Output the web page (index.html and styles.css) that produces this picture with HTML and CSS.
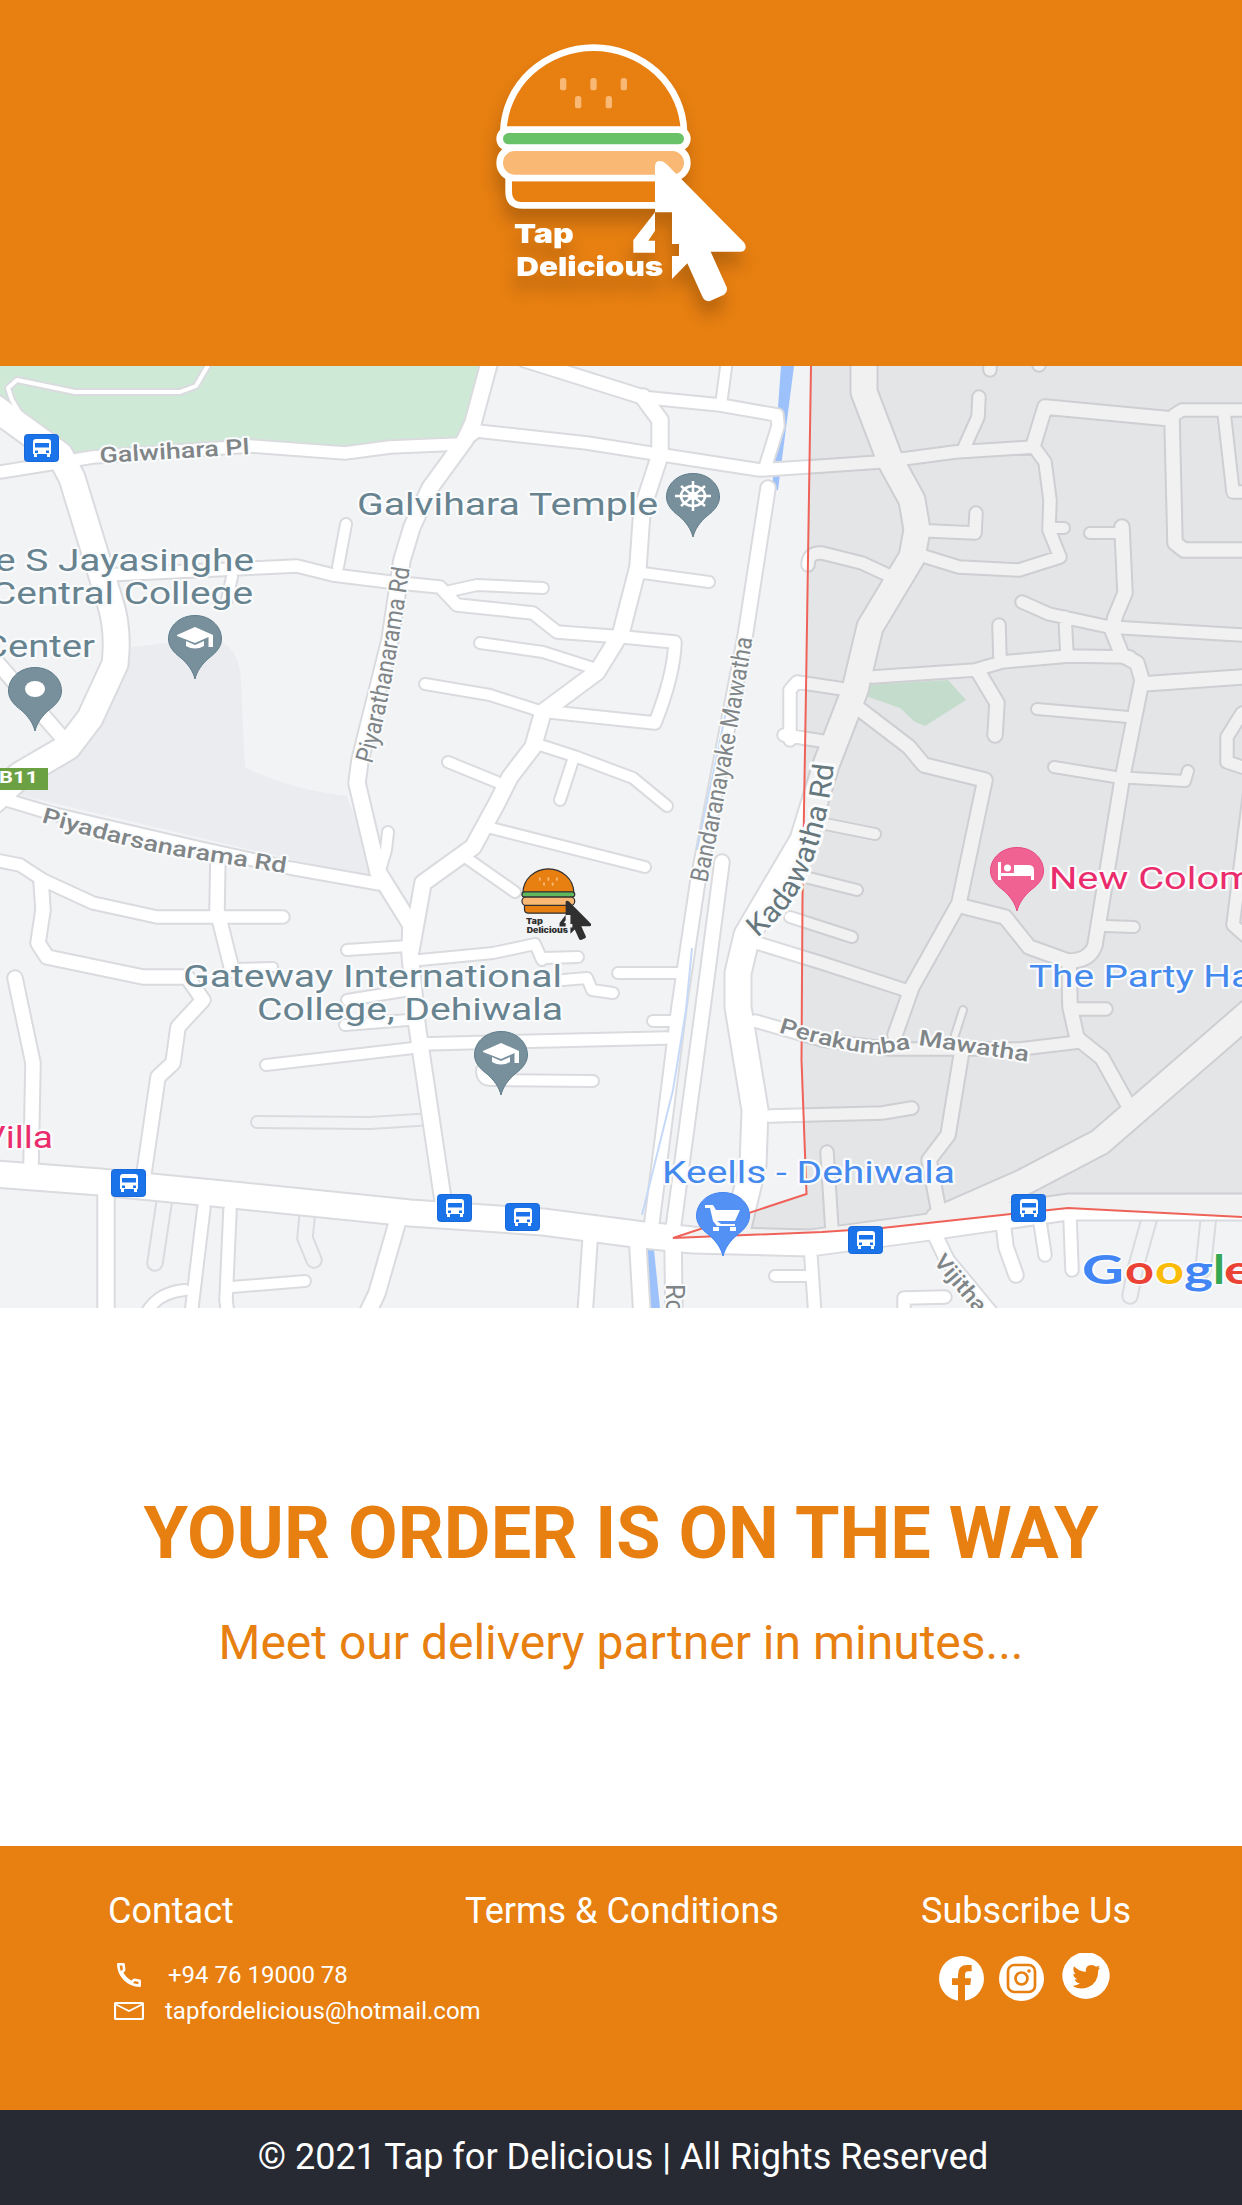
FILE: index.html
```html
<!DOCTYPE html>
<html lang="en">
<head>
<meta charset="utf-8">
<title>Tap for Delicious</title>
<link rel="stylesheet" href="styles.css">
</head>
<body>
<svg class="sprites" aria-hidden="true">
  <symbol id="logo" viewBox="0 0 900 960">
    <g class="logo-line">
      <path class="logo-bun" d="M100 334A271 258 0 0 1 371 83A271 258 0 0 1 642 334Z"/>
      <path class="logo-bun" d="M116 474V515Q116 556 158 556H590V474Z"/>
      <rect class="logo-patty" x="89" y="383" width="563" height="91" rx="45"/>
      <rect class="logo-salad" x="89" y="329" width="563" height="54" rx="27"/>
    </g>
    <g class="logo-seed">
      <rect x="270" y="174" width="19" height="37" rx="8"/><rect x="361" y="174" width="19" height="37" rx="8"/><rect x="452" y="174" width="19" height="37" rx="8"/>
      <rect x="315" y="228" width="19" height="37" rx="8"/><rect x="407" y="228" width="19" height="37" rx="8"/>
    </g>
    <g class="logo-ink">
      <path d="M555 438Q556 423 570 423Q580 423 590 433L820 665Q830 675 826 686Q822 695 812 695H722L770 802Q774 815 762 824L720 843Q706 846 698 832L652 730L606 777V708H627V672H606V577H555Z"/>
      <path d="M555 577L490 660V698H555V662H535L555 632Z"/>
      <text x="132" y="669" textLength="179" lengthAdjust="spacingAndGlyphs">Tap</text>
      <text x="139" y="767" textLength="441" lengthAdjust="spacingAndGlyphs">Delicious</text>
    </g>
  </symbol>
  <symbol id="bus" viewBox="0 0 35 28">
    <rect class="bus-plate" x=".5" y=".5" width="34" height="27" rx="3"/>
    <path fill="#fff" fill-rule="evenodd" d="M9 8Q9 5 12 5H24Q27 5 27 8V20H26V23H23V20H13V23H10V20H9ZM11 9V13.500H25V9ZM11 16.500V19H14V16.500ZM22 16.500V19H25V16.500Z"/>
  </symbol>
  <symbol id="pin" viewBox="-28 -66 56 66" overflow="visible">
    <path d="M0-1C-2-9-7-16-14-22C-22-28-26.500-34-26.500-41C-26.500-54-15-64.500 0-64.500S26.500-54 26.500-41C26.500-34 22-28 14-22C7-16 2-9 0-1Z"/>
  </symbol>
  <symbol id="cap" viewBox="-20 -20 40 30" overflow="visible">
    <path fill="#fff" d="M-18-2L0-10L18-2V10H13.500V0L0 6L-18-1ZM-9 4L0 8L9 4V9Q0 14-9 9Z"/>
  </symbol>
</svg>

<header class="header">
  <svg class="logo" role="img" aria-label="Tap 4 Delicious"><use href="#logo"/></svg>
</header>

<main>
<svg class="map" viewBox="0 366 1242 942" role="img" aria-label="Delivery map">
  <defs>
    <g id="lanes">
      <path class="w10" d="M257 1122L370 1123L433 1119"/>
      <path class="w14" d="M164 1203L155 1263M307 1217L305 1238L314 1260M1149 1220L1135 1270L1130 1296M1208 1222L1203 1270"/>
    </g>
    <g id="roads">
      <path class="w5" d="M210 362L196 386L180 392H75L17 380L8 388L12 400L24 420"/>
      <path class="w6" d="M963 1010L955 1035"/>
      <path class="w8" d="M230 968L273 967"/>
      <path class="w10" d="M727 360L721 405M643 573L709 582M450 591L477 585L543 588M480 643L543 652L593 668M425 684L490 695L543 712M448 762L497 782M540 745L577 757L633 778L667 806M573 760L560 800M487 827L645 867M465 857L515 892M420 960L493 953L535 944L542 960M543 958L578 957M563 980L587 978L592 990L613 993M618 973H677M346 524L338 567M232 577L227 600M347 950L408 946M347 1000L410 990M388 832L386 850L380 870M266 1065L413 1048M345 1025L408 1020M1055 528H1064M1090 533H1122M1037 709L1128 717M1054 767L1115 777L1185 781L1188 771M815 822L875 834M805 877L857 890M790 917L852 937M1105 926L1134 927M775 1276H807M232 1287L305 1281M185 1290Q160 1292 148 1310M653 1021H672M482 1070Q482 1080 490 1080L593 1081"/>
      <path class="w12" d="M0 472L50 464L93 457L250 446L345 453L390 447L460 444L477 431L587 443L650 453L760 470L822 466L880 462L955 452L1034 447M640 397L720 405L777 415L778 426L765 468M105 575L297 566L333 575L390 582L440 587L457 605L533 613L557 632L623 637L675 642Q674 675 655 723L550 712M0 861L20 865L43 880L93 903L157 917H283M0 798L50 813L200 848L290 868L380 884M808 565Q808 552 822 553L862 563L890 576M790 740V690L797 682L850 690M784 735L822 741M979 397L978 417L964 448M990 366V370M1039 363V365M930 531L975 533L976 513M1174 415L1182 410H1242M1224 412L1233 492H1242M1034 447L1045 462L1050 500L1049 530L1060 557L1019 570L959 567L920 555M1022 602L1049 614L1109 627L1242 635M1065 617L1067 655M999 625L1000 660M872 677L975 670L1002 662L1069 656L1130 657M420 1044L667 1038M770 1116L882 1113L912 1108M827 1152L832 1230M755 1021L822 1040L890 1049H1020L1079 1042M757 943L822 963L905 990M1077 1009H1106M945 1297L904 1298V1315M1040 1222L1045 1255M1070 1217L1072 1270M811 1257L815 1315M204 1207L191 1315M230 1210L226 1300L228 1315M1250 790L1233 925L1250 940M1242 713L1227 737V762L1242 767"/>
      <path class="w14" d="M1034 443L1045 407L1172 419L1175 543L1184 550H1242M1142 684L1242 677M979 673L997 703L995 735M858 708L909 747L924 765L985 780L959 903L912 987L895 1035M1122 527L1125 593L1115 617L1112 630L1122 655L1137 663L1142 680L1122 780L1095 945Q1090 961 1068 961L1029 947L1005 917L965 907M1069 961L1070 1007L1077 1038L1102 1058L1127 1103M962 1050L948 1135L929 1160L938 1207M935 1235L947 1260L990 1312M1003 1222L1006 1247L1016 1275M590 1240L585 1315M768 488L745 637L698 880L679 1007L651 1230M722 862L703 1007L673 1230M41 880L43 910L38 943L47 957L143 977L187 977L203 1000L178 1027L173 1063L158 1077L143 1180M218 855L217 910L232 970M15 978L33 1063L31 1165M525 360L643 397M-5 660L60 735"/>
      <path class="w16" d="M490 360L473 423L465 440L430 488L412 527L402 560L390 640L360 760L357 783L378 872L411 925L410 953L417 1025L443 1200M643 397L660 420V455L642 510L638 567L621 633L597 672L543 712L533 747L510 777L497 803L473 847L423 883L411 950M638 1247L642 1315M673 1240L674 1315M106 1190V1315M398 1220L377 1293L368 1312"/>
      <path class="w26" d="M-5 408L60 455L72 478L110 602Q119 630 115 664L90 718L68 747L20 775L-6 800M864 360V392L890 460L912 500L917 530L912 557L870 627L855 690L826 765L803 840L747 935L738 973V1007L755 1110L753 1165L735 1240M-5 1174L100 1182L233 1195L410 1213L543 1222L643 1235L693 1240L810 1243L922 1228L1068 1207H1250M938 1220L1022 1183L1100 1142L1250 1012"/>
    </g>
    <path id="t1" d="M100 463L252 454"/>
    <path id="t2" d="M41 822Q110 843 170 855L290 874"/>
    <path id="t3" d="M372 764Q390 705 410 566"/>
    <path id="t4" d="M707 883Q729 780 753 636"/>
    <path id="t5" d="M757 938C798 905 810 870 820 838Q831 800 834 761"/>
    <path id="t6" d="M778 1032Q840 1052 880 1054L915 1048"/>
    <path id="t7" d="M918 1045L1030 1062"/>
    <path id="t8" d="M933 1262L985 1324"/>
  </defs>

  <rect class="land" y="366" width="1242" height="942"/>
  <path class="campus" d="M133 647L205 638Q241 640 241 685L245 767Q285 788 347 796L378 880L20 795Z"/>
  <path class="park" d="M0 366H483L462 443L345 452L250 446L70 455L0 400ZM868 685L948 680L966 700L925 726L915 722L900 708L866 696Z"/>
  <path class="water" d="M781 366H794L778 490H772ZM645 1250H654L660 1308H650Z"/>
  <use class="casing" href="#lanes"/><use class="lane-fill" href="#lanes"/>
  <use class="casing" href="#roads"/><use class="road-fill" href="#roads"/>
  <path class="stream" d="M739 650L697 850M692 948L686 1010L673 1090L642 1215"/>
  <path class="outside" d="M811 366L808 560L806 690L802.500 900L801 1060L807 1194L673 1238L822 1232L882 1228L1011 1214L1068 1208L1242 1217V366Z"/>
  <path class="border" d="M811 366L808 560L806 690L802.500 900L801.500 1060L806.500 1194L673 1238L822 1232L882 1228L1011 1214L1068 1208L1242 1217"/>

  <g class="street">
    <text><textPath href="#t1" textLength="150" lengthAdjust="spacingAndGlyphs">Galwihara Pl</textPath></text>
    <text><textPath href="#t2" textLength="250" lengthAdjust="spacingAndGlyphs">Piyadarsanarama Rd</textPath></text>
    <text class="tall"><textPath href="#t3" textLength="200" lengthAdjust="spacingAndGlyphs">Piyarathanarama Rd</textPath></text>
    <text class="tall"><textPath href="#t4" textLength="249" lengthAdjust="spacingAndGlyphs">Bandaranayake Mawatha</textPath></text>
    <text class="major"><textPath href="#t5" textLength="195" lengthAdjust="spacingAndGlyphs">Kadawatha Rd</textPath></text>
    <text><textPath href="#t6" textLength="136" lengthAdjust="spacingAndGlyphs">Perakumba</textPath></text>
    <text><textPath href="#t7" textLength="111" lengthAdjust="spacingAndGlyphs">Mawatha</textPath></text>
    <text><textPath href="#t8" textLength="68" lengthAdjust="spacingAndGlyphs">Vijitha</textPath></text>
    <text class="tall" transform="translate(666 1284) rotate(90)">Ro</text>
  </g>

  <g class="place">
    <text x="357" y="515" textLength="301" lengthAdjust="spacingAndGlyphs">Galvihara Temple</text>
    <text x="-5" y="571" textLength="259" lengthAdjust="spacingAndGlyphs">e S Jayasinghe</text>
    <text x="-9" y="604" textLength="262" lengthAdjust="spacingAndGlyphs">Central College</text>
    <text x="-17" y="657" textLength="112" lengthAdjust="spacingAndGlyphs">Center</text>
    <text x="183" y="987" textLength="379" lengthAdjust="spacingAndGlyphs">Gateway International</text>
    <text x="257" y="1020" textLength="306" lengthAdjust="spacingAndGlyphs">College, Dehiwala</text>
    <text class="hotel" x="1049" y="889" textLength="205" lengthAdjust="spacingAndGlyphs">New Colom</text>
    <text class="hotel" x="-18" y="1148" textLength="71" lengthAdjust="spacingAndGlyphs">Villa</text>
    <text class="shop" x="1029" y="987" textLength="223" lengthAdjust="spacingAndGlyphs">The Party Ha</text>
    <text class="shop" x="662" y="1183" textLength="293" lengthAdjust="spacingAndGlyphs">Keells - Dehiwala</text>
  </g>

  <rect class="route" y="768" width="48" height="22"/>
  <text class="route-no" x="-1" y="783" textLength="39" lengthAdjust="spacingAndGlyphs">B11</text>

  <g class="stops">
    <use href="#bus" x="24" y="434" width="35" height="28"/><use href="#bus" x="111" y="1169" width="35" height="28"/>
    <use href="#bus" x="437" y="1194" width="35" height="28"/><use href="#bus" x="505" y="1203" width="35" height="28"/>
    <use href="#bus" x="848" y="1226" width="35" height="28"/><use href="#bus" x="1011" y="1194" width="35" height="28"/>
  </g>

  <g class="pin-gray">
    <use href="#pin" x="167" y="614" width="56" height="66"/>
    <use href="#pin" x="665" y="472" width="56" height="66"/>
    <use href="#pin" x="7" y="666" width="56" height="66"/>
    <use href="#pin" x="473" y="1030" width="56" height="66"/>
  </g>
  <use href="#cap" x="175" y="617" width="40" height="30"/>
  <use href="#cap" x="481" y="1033" width="40" height="30"/>
  <ellipse cx="35" cy="689" rx="10" ry="8" fill="#fff"/>
  <g class="wheel" transform="translate(693 496)">
    <ellipse rx="12" ry="10"/><path d="M-18 0H18M0-15V15M-12-10L12 10M-12 10L12-10"/><ellipse rx="4" ry="3"/>
  </g>
  <use class="pin-blue" href="#pin" x="695" y="1191" width="56" height="66"/>
  <path fill="#fff" d="M705 1205H713L716 1210H740L735 1221H717L721 1224H735V1226H717L713 1221L710 1208H705ZM713 1227H719V1231H713ZM730 1227H736V1231H730Z"/>
  <use class="pin-pink" href="#pin" x="989" y="846" width="56" height="66"/>
  <path fill="#fff" d="M998 862H1001V873H1014V865H1028Q1034 865 1034 870V880H1031V876H1001V880H998Z"/><circle cx="1007.500" cy="868" r="3.500" fill="#fff"/>

  <g class="google">
    <text class="g-blue" x="1082" y="1284" textLength="42" lengthAdjust="spacingAndGlyphs">G</text>
    <text class="g-red" x="1125" y="1284" textLength="29" lengthAdjust="spacingAndGlyphs">o</text>
    <text class="g-yellow" x="1155" y="1284" textLength="29" lengthAdjust="spacingAndGlyphs">o</text>
    <text class="g-blue" x="1184" y="1284" textLength="29" lengthAdjust="spacingAndGlyphs">g</text>
    <text class="g-green" x="1213" y="1284" textLength="12" lengthAdjust="spacingAndGlyphs">l</text>
    <text class="g-red" x="1224" y="1284" textLength="29" lengthAdjust="spacingAndGlyphs">e</text>
  </g>
  <use class="courier" href="#logo" x="513.600" y="861" width="84.400" height="90"/>
</svg>

<section class="status">
  <h1>YOUR ORDER IS ON THE WAY</h1>
  <p>Meet our delivery partner in minutes...</p>
</section>
</main>

<footer>
  <div class="links">
    <section>
      <h2>Contact</h2>
      <ul class="contact">
        <li class="phone"><svg width="24" height="24" viewBox="0 0 24 24"><path fill="none" stroke="#fff" stroke-width="2.600" stroke-linejoin="round" d="M1.300 1.300H6.500L7.200 7L4.500 9.500Q8 16 14.500 19.500L17 16.800L22.700 17.800V22.700Q14 22.500 7.500 16Q1.300 9.500 1.300 1.300Z"/><path fill="#fff" d="M3 8L6 9Q9 15 15 18L16 21Q7 18 3 8Z"/></svg><span>+94 76 19000 78</span></li>
        <li class="mail"><svg width="30" height="18" viewBox="0 0 30 18"><rect x="1" y="1" width="28" height="16" rx="1" fill="none" stroke="#fff" stroke-width="2.200"/><path d="M2 2.500L15 9L28 2.500" fill="none" stroke="#fff" stroke-width="1.600"/></svg><span>tapfordelicious@hotmail.com</span></li>
      </ul>
    </section>
    <section><h2>Terms &amp; Conditions</h2></section>
    <section>
      <h2>Subscribe Us</h2>
      <div class="social">
        <svg width="45" height="45" viewBox="0 0 135 135"><circle cx="67.500" cy="67.500" r="67.500" fill="#fff"/><path class="cut" d="M57 135V87H39V67H57V56Q57 27 84 27H98V46H88Q78 46 78 57V67H96L94 87H78V135Z"/></svg>
        <svg width="45" height="45" viewBox="0 0 135 135"><circle cx="67.500" cy="67.500" r="67.500" fill="#fff"/><rect class="cut-line" x="27" y="27" width="81" height="81" rx="19"/><circle class="cut-line" cx="67.500" cy="67.500" r="18"/><circle class="cut" cx="90" cy="45" r="5.500"/></svg>
        <svg class="twitter" width="48" height="47" viewBox="0 0 144 141"><path d="M45 3Q50 0 56 0H88Q94 0 99 3A71 70 0 1 1 45 3Z" fill="#fff"/><path class="cut" d="M31 98Q44 99 54 91Q41 90 38 79Q42 80 46 78Q34 74 34 62L41 64Q30 53 36 40Q50 55 71 57Q70 36 88 36Q97 36 102 41L113 38L109 46L114 44L109 51Q109 90 78 103Q51 112 31 98Z"/></svg>
      </div>
    </section>
  </div>
  <p class="copyright">© 2021 Tap for Delicious | All Rights Reserved</p>
</footer>
</body>
</html>
```

FILE: styles.css
```css
:root { --orange: #e77f11; }
* { box-sizing: border-box; }
body { margin: 0; background: #fff; font-family: Roboto, "Liberation Sans", sans-serif; }
h1, h2, p, ul { margin: 0; padding: 0; font-weight: 400; list-style: none; }
.sprites { display: block; width: 0; height: 0; }

.header { height: 366px; padding: 20px 0 0 470px; background: var(--orange); }
.logo {
  display: block; width: 300px; height: 320px;
  --line: #fff; --line-width: 20px; --salad: #69c268;
  filter: drop-shadow(-2px 14px 8px rgba(0, 0, 0, .2));
}
.courier { --line: #303030; --line-width: 13px; --salad: #5fb75e; }
.logo-line { stroke: var(--line); stroke-width: var(--line-width); stroke-linejoin: round; }
.logo-bun { fill: var(--orange); }
.logo-patty, .logo-seed { fill: #f9b975; }
.logo-salad { fill: var(--salad); }
.logo-ink { fill: var(--line); font: 900 79px Inter, sans-serif; }
.logo-ink text { stroke: none; }

.map { display: block; width: 1242px; height: 942px; }
.land { fill: #f2f3f5; }
.campus { fill: #ebecf0; }
.park { fill: #cfe9d7; }
.water { fill: #9dc1fb; }
.stream { fill: none; stroke: #c6d9f8; stroke-width: 2px; }
.outside { fill: #000; fill-opacity: .055; }
.border { fill: none; stroke: #ef6258; stroke-width: 2px; }
#roads path, #lanes path { fill: none; stroke-linecap: round; stroke-linejoin: round; stroke-width: calc(var(--w) + var(--edge)); }
.w5 { --w: 4px; } .w6 { --w: 6px; } .w8 { --w: 8px; } .w10 { --w: 10px; } .w12 { --w: 11.5px; }
.w14 { --w: 13.5px; } .w16 { --w: 15.5px; } .w26 { --w: 25px; }
.casing { --edge: 4px; stroke: #dadbdf; }
.road-fill { --edge: 0px; stroke: #fff; }
.lane-fill { --edge: 0px; stroke: #f2f3f5; }

.map text { paint-order: stroke; stroke: #fafbfc; stroke-width: 4px; stroke-linejoin: round; }
.street { fill: #808587; font-size: 22px; font-weight: 500; }
.street .tall { font-size: 25px; font-weight: 400; }
.map .street .major { fill: #66777d; stroke-width: 6px; font-size: 29px; font-weight: 400; }
.place { fill: #67838f; font-size: 31px; }
.place .hotel { fill: #ea2c6c; }
.place .shop { fill: #4489ee; }
.route { fill: #6ba043; }
.map .route-no { fill: #fff; stroke: none; font-size: 17px; font-weight: 700; }
.bus-plate { fill: #1a73e8; stroke: #1768d8; }
.pin-gray { fill: #78909c; stroke: #607d8b; }
.pin-blue { fill: #5491f5; stroke: #4285f4; }
.pin-pink { fill: #f06292; stroke: #e94883; }
.wheel { fill: none; stroke: #fff; stroke-width: 2.5px; }
.google { font: 700 41px Lato, sans-serif; }
.google text { stroke-width: 3px; }
.g-blue { fill: #4285f4; } .g-red { fill: #ea4335; } .g-yellow { fill: #fbbc05; } .g-green { fill: #34a853; }

.status { height: 538px; padding-top: 184px; color: var(--orange); text-align: center; }
.status h1 { font-size: 72px; font-weight: 700; line-height: 84px; }
.status p { margin-top: 39px; font-size: 48px; line-height: 56px; }

.links { display: grid; grid-template-columns: 357px 456px 1fr; height: 264px; padding: 44px 0 0 108px; background: var(--orange); color: #fff; }
.links h2 { font-size: 36px; line-height: 42px; white-space: nowrap; }
.contact { padding: 25px 0 0 6px; font-size: 24px; }
.contact li { display: flex; align-items: center; height: 36px; white-space: nowrap; }
.contact svg { flex: none; }
.phone { gap: 27px; padding-left: 3px; }
.mail { gap: 21px; }
.social { display: flex; align-items: flex-start; gap: 15px; padding: 24px 0 0 18px; }
.social .twitter { margin: -3px 0 0 3px; }
.cut { fill: var(--orange); }
.cut-line { fill: none; stroke: var(--orange); stroke-width: 8px; }
.copyright { height: 95px; padding-left: 4px; background: #272a33; color: #fff; font-size: 36px; line-height: 94px; text-align: center; }
```
